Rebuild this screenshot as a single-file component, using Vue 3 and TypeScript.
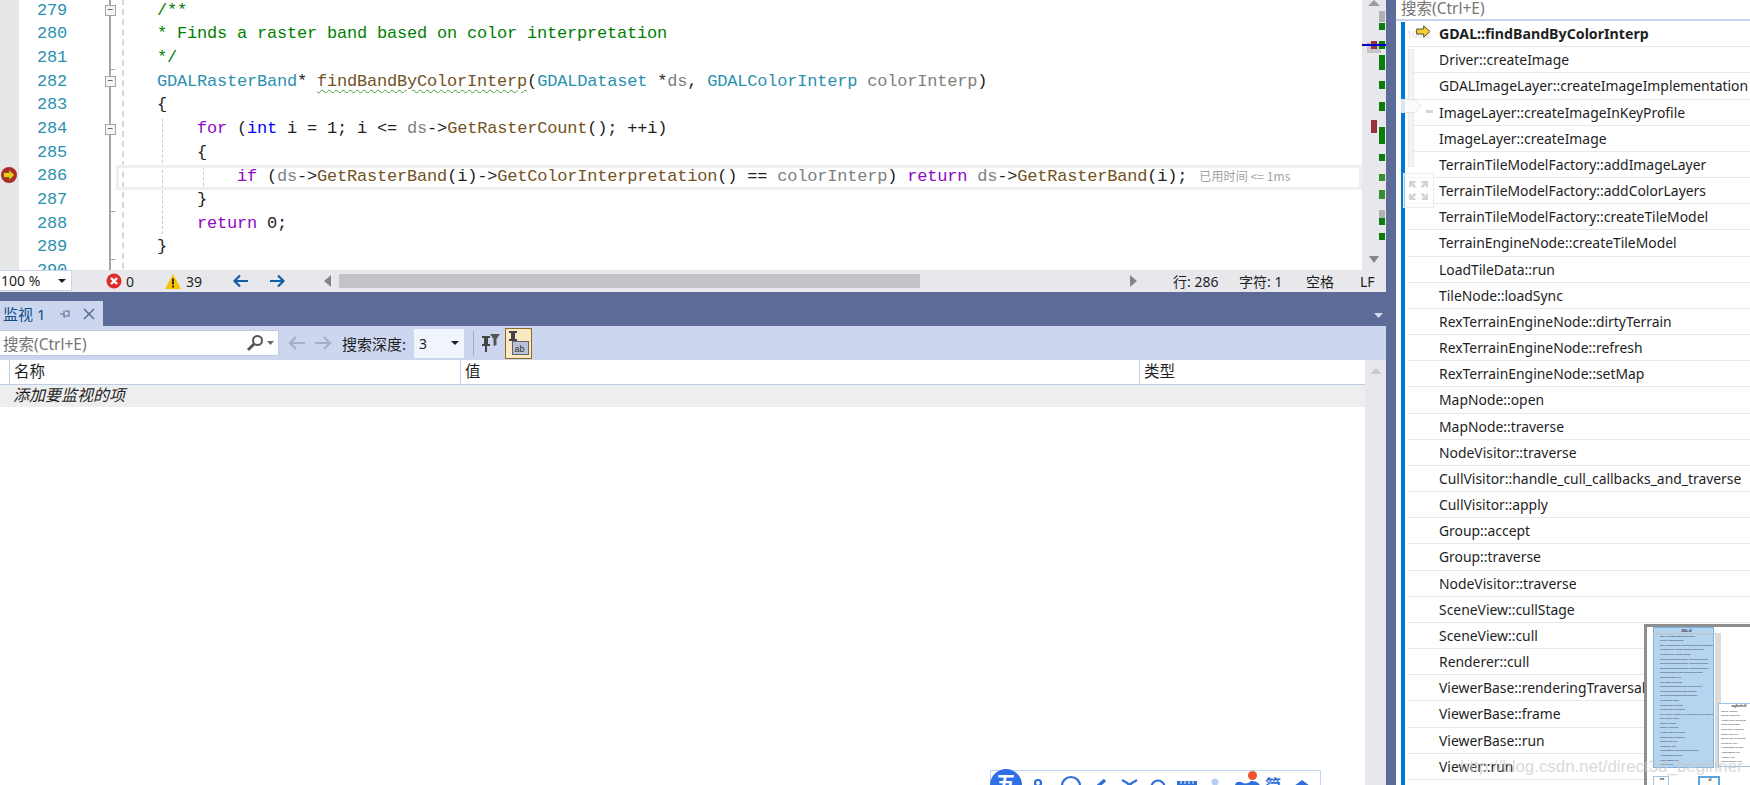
<script setup lang="ts">
interface Token { t: string; c?: string }
const lines: { n: number; toks: Token[]; cur?: boolean }[] = [
  { n: 279, toks: [{ t: '    /**', c: 'cm' }] },
  { n: 280, toks: [{ t: '    * Finds a raster band based on color interpretation', c: 'cm' }] },
  { n: 281, toks: [{ t: '    */', c: 'cm' }] },
  { n: 282, toks: [
    { t: '    ' }, { t: 'GDALRasterBand', c: 'ty' }, { t: '* ' }, { t: 'findBandByColorInterp', c: 'fnw' }, { t: '(' },
    { t: 'GDALDataset', c: 'ty' }, { t: ' *' }, { t: 'ds', c: 'pa' }, { t: ', ' }, { t: 'GDALColorInterp', c: 'ty' }, { t: ' ' }, { t: 'colorInterp', c: 'pa' }, { t: ')' }
  ] },
  { n: 283, toks: [{ t: '    {' }] },
  { n: 284, toks: [
    { t: '        ' }, { t: 'for', c: 'kw' }, { t: ' (' }, { t: 'int', c: 'bl' }, { t: ' i = 1; i <= ' }, { t: 'ds', c: 'pa' }, { t: '->' }, { t: 'GetRasterCount', c: 'fn' }, { t: '(); ++i)' }
  ] },
  { n: 285, toks: [{ t: '        {' }] },
  { n: 286, cur: true, toks: [
    { t: '            ' }, { t: 'if', c: 'kw' }, { t: ' (' }, { t: 'ds', c: 'pa' }, { t: '->' }, { t: 'GetRasterBand', c: 'fn' }, { t: '(i)->' }, { t: 'GetColorInterpretation', c: 'fn' }, { t: '() == ' }, { t: 'colorInterp', c: 'pa' }, { t: ') ' }, { t: 'return', c: 'kw' }, { t: ' ' }, { t: 'ds', c: 'pa' }, { t: '->' }, { t: 'GetRasterBand', c: 'fn' }, { t: '(i);' }
  ] },
  { n: 287, toks: [{ t: '        }' }] },
  { n: 288, toks: [{ t: '        ' }, { t: 'return', c: 'kw' }, { t: ' 0;' }] },
  { n: 289, toks: [{ t: '    }' }] },
  { n: 290, toks: [{ t: '' }] }
]

const stack = [
  'GDAL::findBandByColorInterp', 'Driver::createImage', 'GDALImageLayer::createImageImplementation',
  'ImageLayer::createImageInKeyProfile', 'ImageLayer::createImage', 'TerrainTileModelFactory::addImageLayer',
  'TerrainTileModelFactory::addColorLayers', 'TerrainTileModelFactory::createTileModel', 'TerrainEngineNode::createTileModel',
  'LoadTileData::run', 'TileNode::loadSync', 'RexTerrainEngineNode::dirtyTerrain', 'RexTerrainEngineNode::refresh',
  'RexTerrainEngineNode::setMap', 'MapNode::open', 'MapNode::traverse', 'NodeVisitor::traverse',
  'CullVisitor::handle_cull_callbacks_and_traverse', 'CullVisitor::apply', 'Group::accept', 'Group::traverse',
  'NodeVisitor::traverse', 'SceneView::cullStage', 'SceneView::cull', 'Renderer::cull',
  'ViewerBase::renderingTraversals', 'ViewerBase::frame', 'ViewerBase::run', 'Viewer::run'
]

const marks = [
  { x: 17, w: 6, y: 11, h: 11, c: '#b0b0b0' }, { x: 17, w: 6, y: 23, h: 7, c: '#0a7d0a' },
  { x: 5, w: 14, y: 42, h: 11, c: '#c6c6c9' }, { x: 17, w: 6, y: 41, h: 8, c: '#0a7d0a' },
  { x: 9, w: 6, y: 41, h: 8, c: '#96323c' }, { x: 17, w: 6, y: 55, h: 15, c: '#0a7d0a' },
  { x: 17, w: 6, y: 81, h: 8, c: '#0a7d0a' }, { x: 17, w: 6, y: 102, h: 9, c: '#0a7d0a' },
  { x: 9, w: 6, y: 120, h: 13, c: '#96323c' }, { x: 17, w: 6, y: 127, h: 17, c: '#0a7d0a' },
  { x: 17, w: 6, y: 154, h: 7, c: '#0a7d0a' }, { x: 17, w: 6, y: 174, h: 7, c: '#348f34' },
  { x: 17, w: 6, y: 190, h: 9, c: '#348f34' }, { x: 17, w: 6, y: 210, h: 8, c: '#b0b0b0' },
  { x: 17, w: 6, y: 218, h: 7, c: '#0a7d0a' }, { x: 17, w: 6, y: 233, h: 7, c: '#0a7d0a' },
  { x: 0, w: 24, y: 44, h: 2, c: '#0000c8' }
]
const boxLines = ['Group::accept', 'Group::traverse', 'NodeVisitor::traverse', 'MapNode::open', 'MapNode::traverse', 'SceneView::cull', 'SceneView::cullStage', 'Renderer::cull', 'ViewerBase::frame', 'ViewerBase::run', 'Viewer::run', 'LoadTileData::run', 'TileNode::loadSync']
</script>

<template>
  <div class="app">
    <div class="left">
      <div class="editor">
        <div class="glyphs">
          <svg class="bp" width="18" height="18" viewBox="0 0 18 18">
            <circle cx="9" cy="9" r="8" fill="#b02a2a" />
            <path d="M3.500 6.500h5.500V3.500l5.500 5.500-5.500 5.500v-3H3.500z" fill="#f2c81e" stroke="#6b5a10" stroke-width=".8" />
          </svg>
        </div>
        <div class="nums">
          <div v-for="l in lines" :key="l.n" class="num">{{ l.n }}</div>
        </div>
        <div class="fold">
          <div class="fold-line"></div>
          <span class="fold-box f1">−</span>
          <span class="fold-box f2">−</span>
          <span class="fold-box f3">−</span>
          <span class="tick t1"></span>
          <span class="tick t2"></span>
          <span class="tick t3"></span>
        </div>
        <div class="code">
          <div class="dash d0"></div>
          <div class="dash d1"></div>
          <div class="dash d2"></div>
          <div class="curline"></div>
          <div v-for="l in lines" :key="l.n" class="line"><span v-for="(k, i) in l.toks" :key="i" :class="k.c">{{ k.t }}</span><span v-if="l.cur" class="elapsed">已用时间 &lt;= 1ms</span></div>
        </div>
        <div class="overview">
          <svg class="arr up" width="12" height="6" viewBox="0 0 12 6"><path d="M0 6l6-6 6 6z" fill="#9a9aa2" /></svg>
          <i v-for="(m, i) in marks" :key="i" class="mark" :style="{ left: m.x + 'px', width: m.w + 'px', top: m.y + 'px', height: m.h + 'px', background: m.c }"></i>
          <svg class="arr down" width="12" height="8" viewBox="0 0 12 8"><path d="M1 0h10L6 7z" fill="#85858c" /></svg>
        </div>
      </div>

      <div class="status">
        <div class="zoom"><span>100 %</span><svg width="8" height="4" viewBox="0 0 8 4"><path d="M0 0h8L4 4z" fill="#1e1e1e" /></svg></div>
        <svg class="err" width="16" height="16" viewBox="0 0 16 16"><circle cx="8" cy="8" r="7.500" fill="#e02b2b" /><path d="M5 5l6 6M11 5l-6 6" stroke="#fff" stroke-width="2.400" /></svg>
        <span class="cnt c1">0</span>
        <svg class="warn" width="16" height="15" viewBox="0 0 16 15"><path d="M8 0l8 15H0z" fill="#f6c500" /><path d="M8 4.500v6M8 11.500v2" stroke="#1e1e1e" stroke-width="1.800" /></svg>
        <span class="cnt c2">39</span>
        <svg class="nav n1" width="16" height="14" viewBox="0 0 16 14"><path d="M15 7H2M7 1.500L1.500 7 7 12.500" fill="none" stroke="#0e5ea8" stroke-width="2.200" /></svg>
        <svg class="nav n2" width="16" height="14" viewBox="0 0 16 14"><path d="M1 7h13M9 1.500L14.500 7 9 12.500" fill="none" stroke="#0e5ea8" stroke-width="2.200" /></svg>
        <svg class="sl" width="7" height="12" viewBox="0 0 7 12"><path d="M7 0v12L0 6z" fill="#85858c" /></svg>
        <div class="hscroll"><div class="hthumb"></div></div>
        <svg class="sr" width="7" height="12" viewBox="0 0 7 12"><path d="M0 0v12l7-6z" fill="#85858c" /></svg>
        <div class="pos">
          <span class="p1">行: 286</span><span class="p2">字符: 1</span><span class="p3">空格</span><span class="p4">LF</span>
        </div>
      </div>

      <div class="tabstrip">
        <div class="tab">
          <span class="tab-t">监视 1</span>
          <svg class="pin" width="12" height="12" viewBox="0 0 12 12"><path d="M1 6h4M5 3v6h1M6 3h4v5H6" fill="none" stroke="#5b6b94" stroke-width="1.100" /></svg>
          <svg class="x" width="12" height="12" viewBox="0 0 12 12"><path d="M1 1l10 10M11 1L1 11" stroke="#5b6b94" stroke-width="1.500" /></svg>
        </div>
        <svg class="tri" width="9" height="5" viewBox="0 0 9 5"><path d="M0 0h9L4.500 5z" fill="#d5dcf0" /></svg>
      </div>

      <div class="toolbar">
        <div class="search">
          <span class="ph">搜索(Ctrl+E)</span>
          <svg width="18" height="18" viewBox="0 0 18 18"><circle cx="11.500" cy="6.500" r="4.500" fill="none" stroke="#555" stroke-width="2" /><path d="M8 10l-6 6" stroke="#555" stroke-width="3" /></svg>
          <svg class="sd" width="7" height="4" viewBox="0 0 7 4"><path d="M0 0h7L3.500 4z" fill="#666" /></svg>
        </div>
        <svg class="ta" width="19" height="16" viewBox="0 0 19 16"><path d="M18 8H3M9 2L3 8l6 6" fill="none" stroke="#a9afc0" stroke-width="2.200" /></svg>
        <svg class="tb" width="19" height="16" viewBox="0 0 19 16"><path d="M1 8h15M10 2l6 6-6 6" fill="none" stroke="#a9afc0" stroke-width="2.200" /></svg>
        <span class="depth">搜索深度:</span>
        <div class="dsel"><span>3</span><svg width="8" height="4" viewBox="0 0 8 4"><path d="M0 0h8L4 4z" fill="#1e1e1e" /></svg></div>
        <i class="tsep"></i>
        <svg class="pinf" width="20" height="20" viewBox="0 0 20 20"><path d="M1 3h8v2H7v6h2v2H6v6H4v-6H1v-2h2V5H1z" fill="#444" /><path d="M9 1h10l-3.500 5v6l-3 1V6z" fill="#555" /></svg>
        <div class="pintab">
          <svg width="23" height="26" viewBox="0 0 23 26"><path d="M2 1h8v2H8v6h2v2H7v7H5v-7H2V9h2V3H2z" fill="#444" /><rect x="5.500" y="11.500" width="16" height="13" fill="#b9c2d8" stroke="#666" /><text x="7.500" y="21.500" font-size="9" font-family="Liberation Sans, sans-serif" fill="#333">ab</text></svg>
        </div>
      </div>

      <div class="watchwrap">
        <div class="watch">
          <div class="head">
            <div class="hc h0"></div>
            <div class="hc h1">名称</div>
            <div class="hc h2">值</div>
            <div class="hc h3">类型</div>
          </div>
          <div class="addrow">添加要监视的项</div>
        </div>
        <div class="wscroll"><svg width="12" height="6" viewBox="0 0 12 6"><path d="M0 6l6-6 6 6z" fill="#c8c8ce" /></svg></div>
      </div>
    </div>

    <div class="divider"></div>

    <div class="right">
      <div class="rsearch">搜索(Ctrl+E)</div>
      <div class="rbody">
        <div class="rbar"></div>
        <div class="rows">
          <div v-for="(s, i) in stack" :key="i" class="row" :class="{ first: i === 0 }">{{ s }}</div>
        </div>
      </div>
    </div>

    <!-- faint editor zoom control floating over the call stack -->
    <div class="zc">
      <span class="zc-t">100%</span>
      <i class="zc-track"></i>
      <svg class="zc-thumb" width="21" height="14" viewBox="0 0 21 14"><path d="M0 .5h14l6 6.500-6 6.500H0z" fill="#fbfbfb" fill-opacity=".85" stroke="#e2e2e2" /></svg>
      <i class="zc-tick"></i>
      <div class="zc-fit"><svg width="19" height="19" viewBox="0 0 18 18"><path d="M1 6V1h5M12 1h5v5M17 12v5h-5M6 17H1v-5M2 2l4 4M16 2l-4 4M16 16l-4-4M2 16l4-4" fill="none" stroke="#d2d2d2" stroke-width="2.200" /></svg></div>
    </div>
    <svg class="cur-arrow" width="15" height="13" viewBox="0 0 15 13"><path d="M.7 4h7V.8L14 6.500 7.700 12.200V9h-7z" fill="#f3cd3b" stroke="#5e5320" /></svg>

    <!-- thumbnail of the code map -->
    <div class="thumb">
      <div class="sel">
        <div class="tl ttl">GDAL.dll</div>
        <div v-for="(s, i) in stack" :key="i" class="tl">{{ s }}</div>
      </div>
      <div class="view"></div>
      <div class="tbox b1"><div class="tl ttl">osgEarth.dll</div><div v-for="(s, i) in boxLines" :key="i" class="tl">{{ s }}</div></div>
      <div class="tbox b2"><div class="tl ttl">exe</div></div>
      <div class="tbox b3"><div class="tl ttl">dll</div></div>
    </div>

    <div class="watermark">http://blog.csdn.net/direct3d_beginner</div>

    <!-- input method bar at the bottom edge -->
    <div class="ime">
      <div class="ime-logo">五</div>
      <svg class="ime-icons" width="329" height="15" viewBox="0 0 329 15">
        <g fill="none" stroke="#2f6fd8" stroke-width="2.200">
          <circle cx="47" cy="12" r="3" />
          <circle cx="80" cy="15" r="9" />
          <path d="M107 15l7-6" stroke-width="3.500" />
          <path d="M131 9l15 9M146 9l-15 9" />
          <circle cx="167" cy="16" r="6.500" />
        </g>
        <rect x="186" y="10" width="20" height="6" fill="#2f6fd8" />
        <path d="M190 10v3M194 10v3M198 10v3M202 10v3" stroke="#fff" />
        <circle cx="224" cy="11" r="3.500" fill="#b9cdf0" />
        <path d="M244 15c0-5 5-5 8-3 3 1 6 0 8-2 4 0 9 2 9 5z" fill="#2f6fd8" />
        <path d="M311 9l8 6H303z" fill="#2f6fd8" />
      </svg>
      <i class="ime-dot"></i>
      <span class="ime-zh">简</span>
    </div>
  </div>
</template>

<style>
html, body { margin: 0; padding: 0; overflow: hidden; background: #fff; }
</style>

<style scoped>
.app { position: relative; width: 1750px; height: 785px; display: flex; overflow: hidden; font-family: "Noto Sans", "Noto Sans CJK SC", sans-serif; color: #1e1e1e; }
.left { width: 1386px; flex: none; display: flex; flex-direction: column; height: 785px; }
.editor { height: 270px; display: flex; position: relative; overflow: hidden; background: #fff; }
.glyphs { width: 19px; background: #e6e7e8; flex: none; position: relative; }
.bp { position: absolute; left: 0; top: 166px; }
.nums { width: 49px; flex: none; margin-top: -1.500px; font-family: "Liberation Mono", monospace; }
.num { height: 23.700px; line-height: 23.700px; padding-left: 18px; font-size: 17px; letter-spacing: -.2px; color: #2b91af; }
.fold { width: 49px; flex: none; position: relative; }
.fold-line { position: absolute; left: 41px; top: 0; bottom: 0; width: 2px; background: #a5a5a5; }
.fold-box { position: absolute; left: 37px; width: 9px; height: 9px; border: 1px solid #a5a5a5; background: #f5f5f5; font: 10px/8px "Liberation Sans", sans-serif; text-align: center; color: #444; }
.f1 { top: 5px; } .f2 { top: 76px; } .f3 { top: 124px; }
.tick { position: absolute; left: 42px; width: 5px; height: 1px; background: #a5a5a5; }
.t1 { top: 69px; } .t2 { top: 211px; } .t3 { top: 259px; }
.code { flex: 1; min-width: 0; position: relative; margin-top: -1.500px; font-family: "Liberation Mono", monospace; font-size: 17px; letter-spacing: -.2px; }
.line { height: 23.700px; line-height: 23.700px; white-space: pre; position: relative; color: #1e1e1e; }
.curline { position: absolute; left: -1px; right: 0; top: 166px; height: 19px; border: 3px solid #eeeef3; }
.dash { position: absolute; top: 0; height: 280px; border-left: 1px dashed #c8c8c8; }
.d0 { left: 5px; border-left-width: 2px; border-color: #d8d8d8; }
.d1 { left: 45px; height: 115px; top: 120px; }
.d2 { left: 86px; height: 20px; top: 167px; }
.cm { color: #008000; }
.ty { color: #2b91af; }
.fnw { color: #74531f; text-decoration: underline wavy #3ca03c 1px; text-underline-offset: 3px; }
.fn { color: #74531f; }
.pa { color: #808080; }
.kw { color: #8f08c4; }
.bl { color: #0000ff; }
.elapsed { font-family: "Noto Sans CJK SC", sans-serif; font-size: 12px; color: #a2a2a2; margin-left: 12px; letter-spacing: .1px; }
.overview { width: 24px; flex: none; background: #e8e8ec; position: relative; }
.arr { position: absolute; left: 6px; }
.up { top: 0; }
.down { top: 256px; left: 6px; }
.mark { position: absolute; display: block; }

.status { height: 22px; background: #e8e8ec; display: flex; align-items: center; position: relative; flex: none; font-size: 14px; }
.zoom { width: 72px; height: 21px; background: #fff; border: 1px solid #c8d4ea; border-left: none; display: flex; align-items: center; justify-content: space-between; padding: 0 5px 0 1px; box-sizing: border-box; margin-top: -1px; }
.zoom span { font-size: 14px; }
.err { margin-left: 34px; }
.cnt { margin-left: 4px; font-size: 14px; }
.warn { margin-left: 31px; }
.c2 { margin-left: 5px; }
.nav { margin-left: 31px; }
.n2 { margin-left: 20px; }
.sl { margin-left: 39px; }
.hscroll { width: 791px; height: 14px; margin-left: 8px; }
.hthumb { width: 581px; height: 14px; background: #c2c3c9; }
.sr { margin-left: 0; }
.pos { display: flex; position: absolute; left: 1173px; top: 0; height: 22px; align-items: center; font-size: 14px; }
.p1 { width: 66px; } .p2 { width: 67px; } .p3 { width: 54px; }

.tabstrip { height: 34px; flex: none; background: #5d6b99; display: flex; align-items: flex-end; justify-content: space-between; }
.tab { width: 103px; height: 25px; background: #ccd6ef; display: flex; align-items: center; color: #0e4c85; }
.tab-t { font-size: 15px; margin-left: 3px; white-space: nowrap; }
.pin { margin-left: 14px; }
.x { margin-left: 12px; }
.tri { margin: 0 3px 8px 0; }

.toolbar { height: 34px; flex: none; background: #ccd6ef; display: flex; align-items: center; }
.search { width: 279px; height: 26px; background: #fff; border: 1px solid #c0cbe0; border-left: none; box-sizing: border-box; display: flex; align-items: center; padding-left: 3px; }
.ph { flex: 1; font-size: 15.500px; color: #767676; white-space: nowrap; }
.sd { margin: 0 4px 0 3px; }
.ta { margin-left: 8px; }
.tb { margin-left: 8px; }
.depth { font-size: 15px; margin-left: 9px; white-space: nowrap; }
.dsel { width: 50px; height: 29px; background: #f0f4fc; margin-left: 8px; display: flex; align-items: center; justify-content: space-between; padding: 0 5px 0 5px; box-sizing: border-box; font-size: 14px; }
.tsep { display: block; width: 1px; height: 25px; background: #a2acc4; margin-left: 9px; }
.pinf { margin-left: 7px; }
.pintab { width: 27px; height: 31px; margin-left: 4px; background: #fbe9c5; border: 1px solid #8c6a1e; box-sizing: border-box; display: flex; align-items: center; justify-content: center; }

.watchwrap { flex: 1; display: flex; min-height: 0; }
.watch { flex: 1; min-width: 0; display: flex; flex-direction: column; background: #fff; }
.head { height: 25px; display: flex; border-bottom: 1px solid #c0cdea; box-sizing: border-box; background: #fff; flex: none; }
.hc { border-left: 1px solid #c0cdea; font-size: 15.500px; line-height: 23px; padding-left: 4px; box-sizing: border-box; }
.h0 { width: 9px; border-left: none; padding: 0; }
.h1 { width: 451px; }
.h2 { width: 679px; }
.h3 { flex: 1; }
.addrow { height: 22px; flex: none; background: #eeeeee; font-size: 16px; line-height: 21px; font-style: italic; padding-left: 13px; }
.wscroll { width: 21px; flex: none; background: #e8e8ec; display: flex; justify-content: center; padding-top: 8px; box-sizing: border-box; }

.divider { width: 10px; flex: none; background: #5d6b99; }
.right { flex: 1; min-width: 0; display: flex; flex-direction: column; background: #fff; }
.rsearch { height: 19px; flex: none; border-bottom: 2px solid #c9d5ee; font-size: 15.500px; line-height: 17px; color: #767676; padding-left: 5px; }
.rbody { flex: 1; display: flex; padding-left: 5px; min-height: 0; }
.rbar { width: 4px; background: #0078d7; flex: none; margin-top: 1px; }
.rows { flex: 1; min-width: 0; padding-left: 2px; }
.row { height: 26.180px; box-sizing: border-box; border-bottom: 1px solid #e8e8e8; font-size: 13.900px; line-height: 25px; padding-left: 32px; white-space: nowrap; overflow: hidden; }
.first { font-weight: 700; font-size: 14.200px; }

.zc { position: absolute; left: 1401px; top: 26px; width: 33px; height: 182px; pointer-events: none; }
.zc-t { position: absolute; left: 6px; top: 3px; font-size: 9px; line-height: 12px; color: #dcdcdc; }
.zc-track { position: absolute; left: 7px; top: 23px; width: 4px; height: 116px; background: #f3f3f3; border: 1px solid #eaeaea; }
.zc-thumb { position: absolute; left: 0; top: 73px; }
.zc-tick { position: absolute; left: 25px; top: 84px; width: 7px; height: 3px; background: #d8d8d8; }
.zc-fit { position: absolute; left: 2px; top: 147px; width: 31px; height: 35px; border: 1px solid #ececec; box-sizing: border-box; background: rgba(255,255,255,.6); display: flex; align-items: center; justify-content: center; }
.cur-arrow { position: absolute; left: 1416px; top: 25px; }

.thumb { position: absolute; left: 1644px; top: 624px; width: 106px; height: 161px; background: #fff; border-left: 3px solid #8e8e8e; border-top: 3px solid #8e8e8e; box-sizing: border-box; overflow: hidden; }
.sel { position: absolute; left: 6px; top: 0; width: 61px; height: 141px; background: #b5d4ef; border: 1px solid #7ab3e3; padding: 1px 0 0 6px; box-sizing: border-box; overflow: hidden; }
.view { position: absolute; left: 6px; top: 6px; width: 68px; height: 135px; border-right: 6px solid rgba(190,190,190,.55); border-top: 2px solid rgba(190,190,190,.55); box-sizing: border-box; }
.tl { font-size: 2.500px; line-height: 4.600px; color: #334; white-space: nowrap; }
.ttl { text-align: center; font-weight: 700; }
.tbox { position: absolute; background: #fff; border: 1px solid #9fc4e4; overflow: hidden; padding-left: 2px; box-sizing: border-box; }
.b1 { left: 71px; top: 76px; width: 40px; height: 64px; }
.b2 { left: 6px; top: 149px; width: 16px; height: 14px; }
.b3 { left: 51px; top: 149px; width: 22px; height: 14px; border: 2px solid #5aa5e0; }

.watermark { position: absolute; left: 1460px; top: 756px; font-size: 16.900px; line-height: 22px; color: rgba(200,200,200,.7); white-space: nowrap; pointer-events: none; font-family: "Liberation Sans", sans-serif; }

.ime { position: absolute; left: 990px; top: 770px; width: 331px; height: 20px; background: #fff; border: 1px solid #bcd6f8; box-sizing: border-box; }
.ime-logo { position: absolute; left: -1px; top: -2px; width: 32px; height: 32px; border-radius: 50%; background: #2f6fe8; color: #fff; font-size: 20px; line-height: 30px; text-align: center; font-weight: 700; }
.ime-icons { position: absolute; left: 0; top: 0; }
.ime-dot { position: absolute; left: 257px; top: 0; width: 9px; height: 9px; border-radius: 50%; background: #f0552d; }
.ime-zh { position: absolute; left: 274px; top: 6px; font-size: 16px; line-height: 16px; color: #2f6fd8; font-weight: 700; }
</style>
